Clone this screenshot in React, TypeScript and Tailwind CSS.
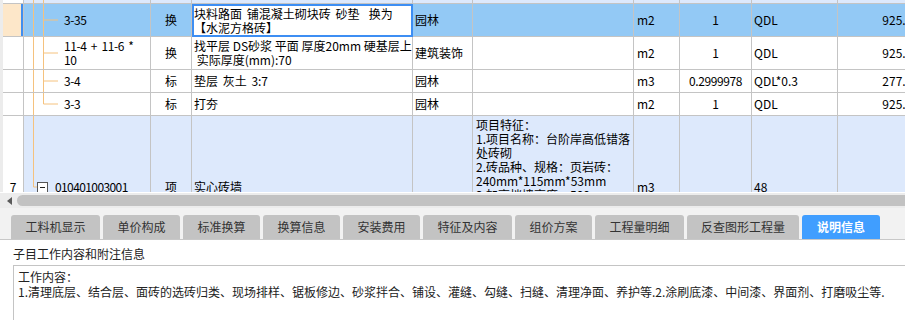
import React from "react";

const LINE = "#f5c27e";
const GRID = "border-[#c4c4c4]";

type TreeKind = "pass" | "mid" | "last" | "root";

// connector lines of the tree column, drawn per row
const TreeLines = ({ kind }: { kind: TreeKind }) => (
  <svg className="absolute inset-0 h-full w-full pointer-events-none">
    {kind === "root" ? (
      <>
        <line x1="9.5" y1="0" x2="9.5" y2="50%" stroke={LINE} />
        <line x1="9.5" y1="50%" x2="13" y2="50%" stroke={LINE} />
      </>
    ) : (
      <>
        <line x1="9.5" y1="0" x2="9.5" y2="100%" stroke={LINE} />
        <line x1="19.5" y1="0" x2="19.5" y2={kind === "last" ? "50%" : "100%"} stroke={LINE} />
        {kind !== "pass" && <line x1="19.5" y1="50%" x2="34" y2="50%" stroke={LINE} />}
      </>
    )}
  </svg>
);

interface SubRow {
  code: React.ReactNode;
  type: string;
  name: React.ReactNode;
  prof: string;
  unit: string;
  qty: string;
  formula: string;
  value: string;
  h: string;
  kind: TreeKind;
  selected?: boolean;
}

const rows: SubRow[] = [
  {
    code: "3-35",
    type: "换",
    name: (
      <>
        块料路面 铺混凝土砌块砖 砂垫&nbsp;&nbsp;换为
        <br />【水泥方格砖】
      </>
    ),
    prof: "园林",
    unit: "m2",
    qty: "1",
    formula: "QDL",
    value: "925.45",
    h: "h-[33px]",
    kind: "mid",
    selected: true,
  },
  {
    code: (
      <>
        11-4 + 11-6 *<br />
        10
      </>
    ),
    type: "换",
    name: (
      <span className="[word-spacing:0px]">
        找平层 DS砂浆 平面 厚度20mm 硬基层上
        <br />
        &nbsp;实际厚度(mm):70
      </span>
    ),
    prof: "建筑装饰",
    unit: "m2",
    qty: "1",
    formula: "QDL",
    value: "925.45",
    h: "h-[33px]",
    kind: "mid",
  },
  {
    code: "3-4",
    type: "标",
    name: "垫层 灰土 3:7",
    prof: "园林",
    unit: "m3",
    qty: "0.2999978",
    formula: "QDL*0.3",
    value: "277.64",
    h: "h-[23px]",
    kind: "mid",
  },
  {
    code: "3-3",
    type: "标",
    name: "打夯",
    prof: "园林",
    unit: "m2",
    qty: "1",
    formula: "QDL",
    value: "925.45",
    h: "h-[23px]",
    kind: "last",
  },
];

const cell = `shrink-0 border-r border-b ${GRID} flex items-center overflow-hidden`;

const tabs = [
  { label: "工料机显示", w: "w-[89px]" },
  { label: "单价构成", w: "w-[77px]" },
  { label: "标准换算", w: "w-[77px]" },
  { label: "换算信息", w: "w-[77px]" },
  { label: "安装费用", w: "w-[77px]" },
  { label: "特征及内容", w: "w-[89px]" },
  { label: "组价方案", w: "w-[77px]" },
  { label: "工程量明细", w: "w-[89px]" },
  { label: "反查图形工程量", w: "w-[112px]" },
  { label: "说明信息", w: "w-[78px]", active: true },
];

const features = [
  "项目特征：",
  "1.项目名称：台阶岸高低错落",
  "处砖砌",
  "2.砖品种、规格：页岩砖：",
  "240mm*115mm*53mm",
  "3.加高挡墙高度：500mm",
];

export default function App() {
  return (
    <div className="w-[905px] h-[320px] overflow-hidden bg-white text-black font-['Noto_Sans_CJK_SC',sans-serif] text-[12px] leading-[14px]">
      {/* grid */}
      <div className="h-[192px] overflow-hidden pl-[3px] bg-[#ececec] [word-spacing:2px]">
        {/* tail of the row above */}
        <div className="flex h-[4px]">
          <div className={`${cell} w-[21px] bg-white`} />
          <div className={`${cell} w-[127px] bg-[#dde9fc] relative`}>
            <TreeLines kind="pass" />
          </div>
          <div className={`${cell} w-[41px] bg-[#dde9fc]`} />
          <div className={`${cell} w-[221px] bg-[#dde9fc]`} />
          <div className={`${cell} w-[60px] bg-[#dde9fc]`} />
          <div className={`${cell} w-[161px] bg-[#dde9fc]`} />
          <div className={`${cell} w-[46px] bg-[#dde9fc]`} />
          <div className={`${cell} w-[72px] bg-[#dde9fc]`} />
          <div className={`${cell} w-[86px] bg-[#dde9fc]`} />
          <div className={`${cell} w-[84px] bg-[#dde9fc]`} />
        </div>

        {rows.map((r, i) => {
          const bg = r.selected ? "bg-[#93c9f5]" : "bg-white";
          return (
            <div key={i} className={`flex ${r.h}`}>
              <div
                className={`${cell} w-[21px] ${
                  r.selected ? "bg-[#fde7c9] shadow-[inset_-2px_0_0_#3f8ef0]" : "bg-white"
                }`}
              />
              <div className={`${cell} w-[127px] ${bg} relative pl-[40px]`}>
                <TreeLines kind={r.kind} />
                <span className="relative tracking-[-0.4px] whitespace-nowrap">{r.code}</span>
              </div>
              <div className={`${cell} w-[41px] ${bg} justify-center`}>{r.type}</div>
              {r.selected ? (
                <div className="shrink-0 w-[221px] border-2 border-[#3d8ef3] bg-white flex items-center overflow-hidden">
                  <span className="whitespace-nowrap">{r.name}</span>
                </div>
              ) : (
                <div className={`${cell} w-[221px] ${bg} pl-[2px]`}>
                  <span className="whitespace-nowrap">{r.name}</span>
                </div>
              )}
              <div className={`${cell} w-[60px] ${bg} pl-[2px] whitespace-nowrap`}>{r.prof}</div>
              <div className={`${cell} w-[161px] ${bg}`} />
              <div className={`${cell} w-[46px] ${bg} pl-[3px]`}>{r.unit}</div>
              <div className={`${cell} w-[72px] ${bg} justify-center tracking-[-0.4px]`}>{r.qty}</div>
              <div className={`${cell} w-[86px] ${bg} pl-[2px]`}>{r.formula}</div>
              <div className={`${cell} w-[84px] ${bg} justify-end pr-[2px]`}>{r.value}</div>
            </div>
          );
        })}

        {/* list item row */}
        <div className="flex h-[143px]">
          <div className={`${cell} w-[21px] bg-white justify-center`}>7</div>
          <div className={`${cell} w-[127px] bg-[#dde9fc] relative pl-[13px] gap-[7px]`}>
            <TreeLines kind="root" />
            <span className="relative shrink-0 w-[11px] h-[11px] border border-[#555] bg-white flex items-center justify-center">
              <span className="w-[5px] h-px bg-[#222]" />
            </span>
            <span className="relative tracking-[-0.6px]">010401003001</span>
          </div>
          <div className={`${cell} w-[41px] bg-[#dde9fc] justify-center`}>项</div>
          <div className={`${cell} w-[221px] bg-[#dde9fc] pl-[2px]`}>实心砖墙</div>
          <div className={`${cell} w-[60px] bg-[#dde9fc]`} />
          <div className={`${cell} w-[161px] bg-[#dde9fc] !items-start pl-[3px] pt-[2px]`}>
            <div className="flex flex-col">
              {features.map((f) => (
                <span key={f} className="whitespace-nowrap">
                  {f}
                </span>
              ))}
            </div>
          </div>
          <div className={`${cell} w-[46px] bg-[#dde9fc] pl-[3px]`}>m3</div>
          <div className={`${cell} w-[72px] bg-[#dde9fc]`} />
          <div className={`${cell} w-[86px] bg-[#dde9fc] pl-[2px]`}>48</div>
          <div className={`${cell} w-[84px] bg-[#dde9fc]`} />
        </div>
      </div>

      {/* horizontal scrollbar */}
      <div className="h-[16px] bg-[#ececec] border-t border-white flex items-center pl-[7px] gap-[5px] overflow-hidden">
        <svg width="5" height="8" className="shrink-0">
          <polygon points="5,0 5,8 0,4" fill="#5a5a5a" />
        </svg>
        <div className="h-[11px] w-[900px] shrink-0 rounded-full bg-[#c2c2c2]" />
      </div>

      {/* tabs */}
      <div className="bg-[#f2f2f2] pt-[7px] pl-[11px] flex gap-[3px] border-b border-[#c8c8c8]">
        {tabs.map((t) => (
          <div
            key={t.label}
            className={`${t.w} h-[24px] shrink-0 rounded-t-[3px] flex items-center justify-center text-[12px] ${
              t.active ? "bg-[#409eff] text-white font-bold" : "bg-[#c3c3c3] text-[#333]"
            }`}
          >
            {t.label}
          </div>
        ))}
      </div>

      {/* description */}
      <div className="bg-white">
        <div className="pl-[13px] pt-[6px] leading-[16px] text-[#222]">子目工作内容和附注信息</div>
        <div className="ml-[13px] mt-[3px] w-[920px] h-[80px] border border-[#c4c4c4] pt-[3px] pl-[4px] leading-[15px] text-[#222]">
          <div>工作内容：</div>
          <div className="whitespace-nowrap">
            1.清理底层、结合层、面砖的选砖归类、现场排样、锯板修边、砂浆拌合、铺设、灌缝、勾缝、扫缝、清理净面、养护等.2.涂刷底漆、中间漆、界面剂、打磨吸尘等.
          </div>
        </div>
      </div>
    </div>
  );
}
